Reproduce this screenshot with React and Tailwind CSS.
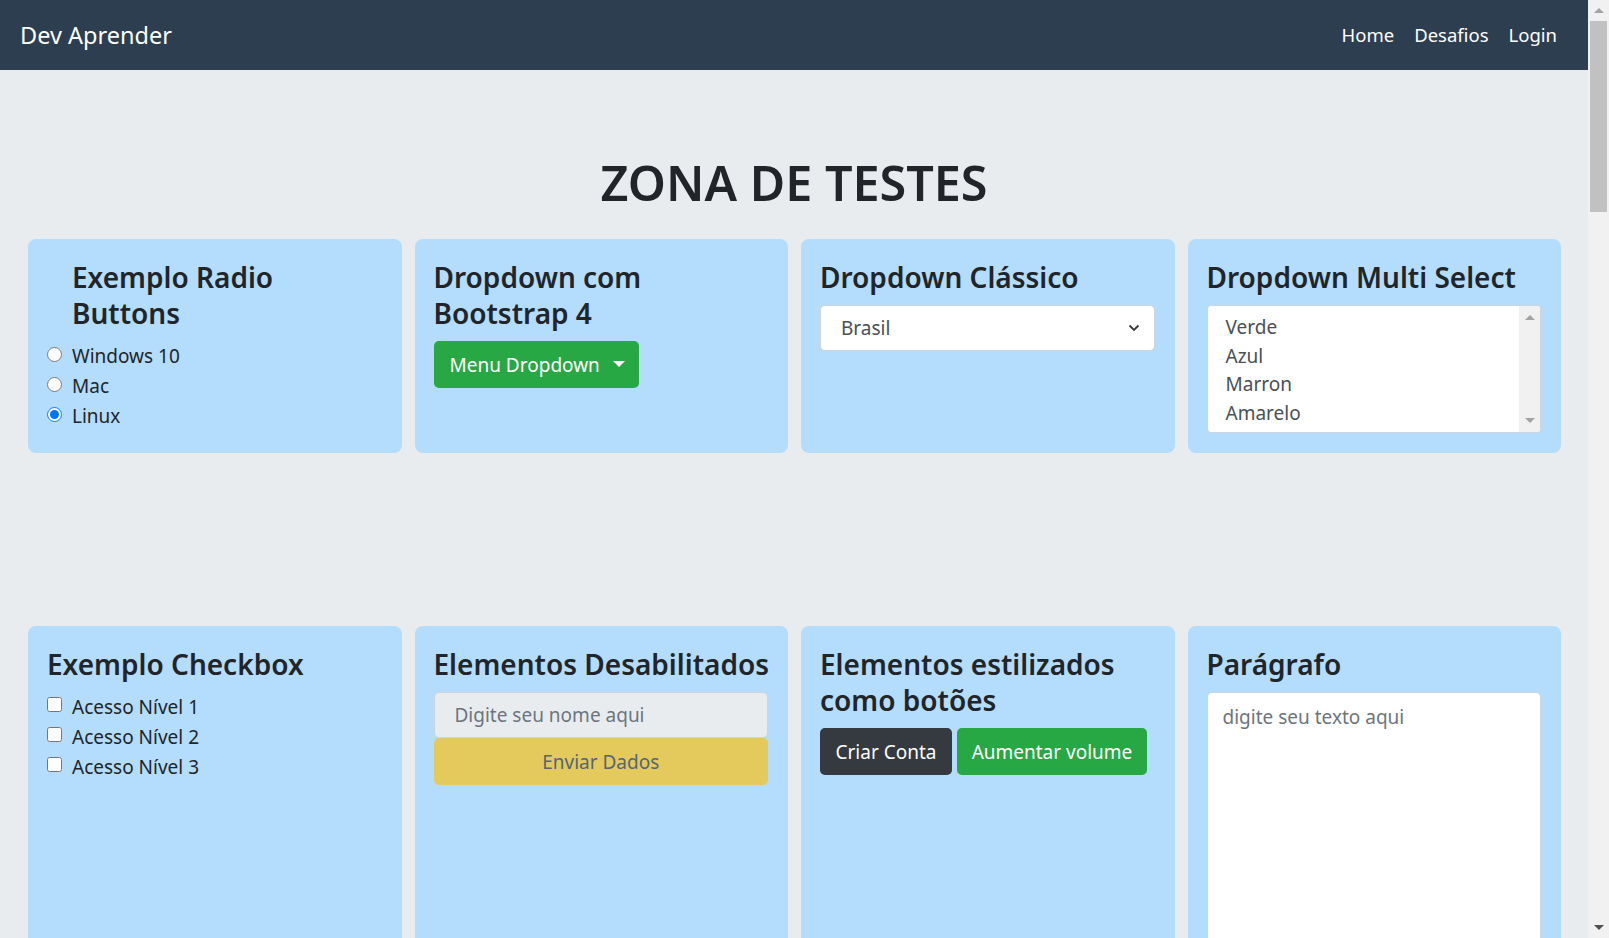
import React from "react";

function Card({ children, className = "" }) {
  return (
    <div className={"rounded-[8px] bg-[#b3dcfd] p-[20px] pl-[19px] " + className}>{children}</div>
  );
}

function H4({ children, className = "" }) {
  return (
    <h4 className={"text-[28px] leading-[36px] font-semibold whitespace-nowrap text-[#212529] mb-[10px] " + className}>
      {children}
    </h4>
  );
}

function Radio({ label, checked }) {
  return (
    <label className="flex items-center h-[30px]">
      <input
        type="radio"
        name="os"
        defaultChecked={checked}
        className="w-[15px] h-[15px] m-0 mr-[10px] mt-[-3px] shrink-0"
      />
      <span>{label}</span>
    </label>
  );
}

function Check({ label }) {
  return (
    <label className="flex items-center h-[30px]">
      <input type="checkbox" className="w-[15px] h-[15px] m-0 mr-[10px] mt-[-5px] shrink-0" />
      <span>{label}</span>
    </label>
  );
}

export default function App() {
  return (
    <div className="flex h-screen w-full overflow-hidden bg-[#e9ecef] font-['Noto_Sans','Open_Sans',sans-serif] text-[19px] leading-[30px] text-[#212529]">
      <div className="flex-1 min-w-0 flex flex-col">
        <nav className="h-[70px] shrink-0 bg-[#2c3e50] flex items-center justify-between pl-[20px] pr-[21px]">
          <span className="text-[23.5px] text-white">Dev Aprender</span>
          <div className="flex items-center text-[18.5px] text-white">
            <span className="px-[10px]">Home</span>
            <span className="px-[10px]">Desafios</span>
            <span className="px-[10px]">Login</span>
          </div>
        </nav>

        <h1 className="mt-[80px] mb-[24px] h-[65px] text-center text-[48.5px] leading-[65px] font-semibold text-[#212529]">
          ZONA DE TESTES
        </h1>

        <div className="grid grid-cols-4 gap-[13px] pl-[28px] pr-[27px]">
          <Card>
            <H4 className="pl-[25px]">
              Exemplo Radio
              <br />
              Buttons
            </H4>
            <Radio label="Windows 10" />
            <Radio label="Mac" />
            <Radio label="Linux" checked />
          </Card>

          <Card>
            <H4>
              Dropdown com
              <br />
              Bootstrap 4
            </H4>
            <button className="h-[47px] w-[205px] rounded-[5px] bg-[#28a745] text-white text-[19px] flex items-center pl-[16px]">
              <span>Menu Dropdown</span>
              <span className="ml-[13px] mt-[-2px] w-0 h-0 border-l-[6px] border-r-[6px] border-t-[6px] border-l-transparent border-r-transparent border-t-white"></span>
            </button>
          </Card>

          <Card>
            <H4>Dropdown Clássico</H4>
            <div className="h-[46px] rounded-[5px] border border-[#ced4da] bg-white flex items-center justify-between pl-[20px] pr-[14px] text-[#495057]">
              <span>Brasil</span>
              <svg width="12" height="8" viewBox="0 0 12 8" className="shrink-0">
                <path d="M1.5 1.5 L6 6 L10.5 1.5" fill="none" stroke="#343a40" strokeWidth="1.8" />
              </svg>
            </div>
          </Card>

          <Card>
            <H4>Dropdown Multi Select</H4>
            <div className="h-[128px] rounded-[4px] border border-[#ced4da] bg-white flex overflow-hidden">
              <div className="flex-1 pl-[18px] pt-[7px] text-[#495057] leading-[28.5px]">
                <div>Verde</div>
                <div>Azul</div>
                <div>Marron</div>
                <div>Amarelo</div>
              </div>
              <div className="w-[21px] bg-[#f1f1f1] flex flex-col items-center justify-between py-[9px]">
                <span className="w-0 h-0 border-l-[5px] border-r-[5px] border-b-[5px] border-l-transparent border-r-transparent border-b-[#a3a3a3]"></span>
                <span className="w-0 h-0 border-l-[5px] border-r-[5px] border-t-[5px] border-l-transparent border-r-transparent border-t-[#a3a3a3]"></span>
              </div>
            </div>
          </Card>
        </div>

        <div className="grid grid-cols-4 gap-[13px] pl-[28px] pr-[27px] mt-[173px]">
          <Card className="min-h-[400px]">
            <H4>Exemplo Checkbox</H4>
            <Check label="Acesso Nível 1" />
            <Check label="Acesso Nível 2" />
            <Check label="Acesso Nível 3" />
          </Card>

          <Card className="min-h-[400px]">
            <H4>Elementos Desabilitados</H4>
            <input
              disabled
              placeholder="Digite seu nome aqui"
              className="block w-full h-[46px] rounded-[5px] border border-[#ced4da] bg-[#e9ecef] pl-[20px] text-[19px] placeholder:text-[#6c757d] outline-none"
            />
            <button
              disabled
              className="block w-full h-[47px] rounded-[5px] bg-[#e4ca5c] text-[#546573] text-[19px] text-center"
            >
              Enviar Dados
            </button>
          </Card>

          <Card className="min-h-[400px]">
            <H4>
              Elementos estilizados
              <br />
              como botões
            </H4>
            <div className="flex gap-[5px]">
              <span className="h-[47px] w-[132px] rounded-[5px] bg-[#343a40] text-white flex items-center justify-center">
                Criar Conta
              </span>
              <span className="h-[47px] w-[190px] rounded-[5px] bg-[#28a745] text-white flex items-center justify-center">
                Aumentar volume
              </span>
            </div>
          </Card>

          <Card className="min-h-[400px]">
            <H4>Parágrafo</H4>
            <textarea
              placeholder="digite seu texto aqui"
              className="block w-full h-[300px] rounded-[5px] border border-[#ced4da] bg-white px-[15px] py-[9px] text-[19px] leading-[30px] placeholder:text-[#6c757d] resize-none outline-none"
            ></textarea>
          </Card>
        </div>
      </div>

      <div className="w-[21px] shrink-0 bg-[#f1f1f1] flex flex-col items-center">
        <div className="h-[21px] flex items-center justify-center">
          <span className="w-0 h-0 border-l-[5px] border-r-[5px] border-b-[5px] border-l-transparent border-r-transparent border-b-[#a3a3a3]"></span>
        </div>
        <div className="w-[17px] h-[191px] bg-[#c1c1c1]"></div>
        <div className="flex-1"></div>
        <div className="h-[21px] flex items-center justify-center">
          <span className="w-0 h-0 border-l-[5px] border-r-[5px] border-t-[5px] border-l-transparent border-r-transparent border-t-[#505050]"></span>
        </div>
      </div>
    </div>
  );
}
